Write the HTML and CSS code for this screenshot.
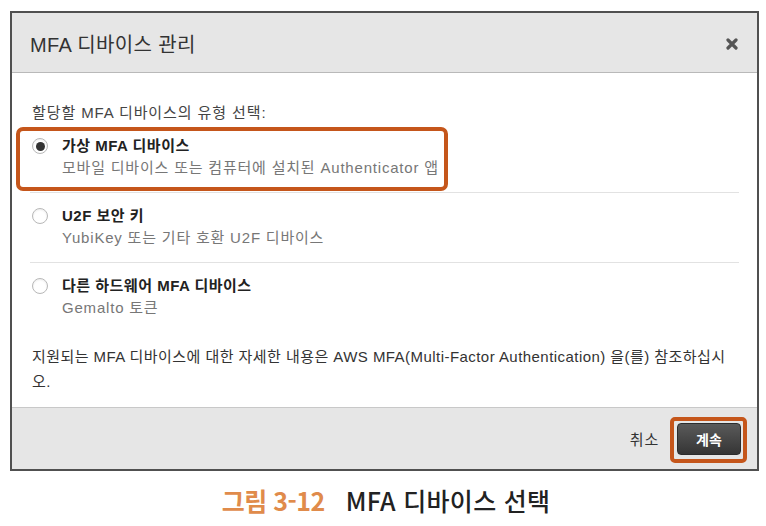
FILE: index.html
```html
<!DOCTYPE html>
<html lang="ko">
<head>
<meta charset="utf-8">
<link rel="stylesheet" href="styles.css">
</head>
<body>
<div class="page">
  <div class="dialog">
    <div class="dlg-header">
      <h1 class="dlg-title">MFA 디바이스 관리</h1>
      <svg class="close" width="12" height="12" viewBox="0 0 12 12"><path d="M2 2 L10 10 M10 2 L2 10" stroke="#555" stroke-width="3.2" stroke-linecap="round"/></svg>
    </div>
    <div class="dlg-body">
      <p class="lead">할당할 MFA 디바이스의 유형 선택:</p>
      <div class="option">
        <span class="highlight"></span>
        <span class="radio checked"></span>
        <div class="opt-text">
          <div class="opt-title">가상 MFA 디바이스</div>
          <div class="opt-sub">모바일 디바이스 또는 컴퓨터에 설치된 Authenticator 앱</div>
        </div>
      </div>
      <div class="option">
        <span class="radio"></span>
        <div class="opt-text">
          <div class="opt-title">U2F 보안 키</div>
          <div class="opt-sub">YubiKey 또는 기타 호환 U2F 디바이스</div>
        </div>
      </div>
      <div class="option last">
        <span class="radio"></span>
        <div class="opt-text">
          <div class="opt-title">다른 하드웨어 MFA 디바이스</div>
          <div class="opt-sub">Gemalto 토큰</div>
        </div>
      </div>
      <p class="note">지원되는 MFA 디바이스에 대한 자세한 내용은 AWS MFA(Multi-Factor Authentication) 을(를) 참조하십시오.</p>
    </div>
    <div class="dlg-footer">
      <span class="cancel">취소</span>
      <span class="btn-wrap">
        <span class="highlight-btn"></span>
        <button class="btn-primary">계속</button>
      </span>
    </div>
  </div>
  <div class="caption"><span class="cap-num">그림 3-12</span><span class="cap-text">MFA 디바이스 선택</span></div>
</div>
</body>
</html>
```

FILE: styles.css
```css
* { box-sizing: border-box; }
html, body { margin: 0; padding: 0; background: #fff; }
body {
  font-family: "Liberation Sans", "Noto Sans CJK KR", Arial, sans-serif;
  color: #444;
}
.page {
  padding: 11px 0 0 10px;
  width: 766px;
  height: 526px;
}
.dialog {
  width: 749px;
  border: 2px solid #505050;
  background: #fff;
}
.dlg-header {
  height: 60px;
  background: #e6e6e6;
  border-bottom: 1px solid #b9b9b9;
  display: flex;
  align-items: center;
  justify-content: space-between;
  padding: 0 19px 0 18px;
}
.dlg-title {
  margin: 0;
  font-size: 20px;
  font-weight: normal;
  color: #333;
  letter-spacing: 0.4px;
  padding-top: 1px;
}
.close { display: block; margin-top: 2px; }
.dlg-body {
  height: 334px;
  padding: 30px 18px 0 20px;
}
.lead {
  margin: 0;
  font-size: 15px;
  line-height: 20px;
  color: #444;
  letter-spacing: 0.9px;
}
.option {
  position: relative;
  display: flex;
  align-items: flex-start;
  padding: 12px 0 13px 0;
  border-bottom: 1px solid #e2e2e2;
  margin-left: -2px;
  padding-left: 2px;
}
.option.last { border-bottom: none; }
.radio {
  width: 16px;
  height: 16px;
  border-radius: 50%;
  border: 1px solid #b8b8b8;
  background: #fff;
  margin-top: 3px;
  margin-right: 14px;
  flex: none;
  box-shadow: inset 0 1px 2px rgba(0,0,0,0.08);
  display: flex;
  align-items: center;
  justify-content: center;
}
.radio.checked::after {
  content: "";
  width: 9px;
  height: 9px;
  border-radius: 50%;
  background: #333;
}
.opt-title {
  font-size: 15px;
  line-height: 22px;
  font-weight: bold;
  color: #222;
  letter-spacing: 0.5px;
}
.opt-sub {
  font-size: 15px;
  line-height: 22px;
  color: #777;
  letter-spacing: 0.8px;
}
.highlight {
  position: absolute;
  left: -14px;
  top: 4px;
  width: 432px;
  height: 64px;
  border: 4px solid #c5561b;
  border-radius: 7px;
  pointer-events: none;
}
.note {
  margin: 12px 0 0 0;
  font-size: 15px;
  line-height: 25px;
  color: #333;
  letter-spacing: 0.45px;
  padding-right: 6px;
}
.dlg-footer {
  height: 62px;
  background: #e6e6e6;
  border-top: 1px solid #c8c8c8;
  display: flex;
  align-items: center;
  justify-content: flex-end;
  padding-right: 16px;
}
.cancel {
  font-size: 15px;
  color: #333;
  margin-right: 18px;
  letter-spacing: 0.8px;
}
.btn-wrap {
  position: relative;
  display: inline-flex;
}
.btn-primary {
  width: 64px;
  height: 32px;
  border: 1px solid #2c2c2c;
  border-radius: 4px;
  background: linear-gradient(#5a5a5a, #353535);
  color: #fff;
  font-family: "Noto Sans CJK KR", sans-serif;
  font-weight: bold;
  font-size: 14px;
  padding: 0;
}
.highlight-btn {
  position: absolute;
  left: -7px;
  top: -6px;
  right: -6px;
  bottom: -8px;
  border: 4px solid #c5561b;
  border-radius: 5px;
  pointer-events: none;
}
.caption {
  margin-top: 11px;
  text-align: center;
  font-family: "Noto Sans CJK KR", sans-serif;
  font-weight: 500;
  font-size: 25px;
  line-height: 36px;
  padding-right: 4px;
}
.cap-num { color: #e08b4b; margin-right: 21px; letter-spacing: -0.5px; font-weight: 700; }
.cap-text { color: #222; letter-spacing: 0.3px; }
```
